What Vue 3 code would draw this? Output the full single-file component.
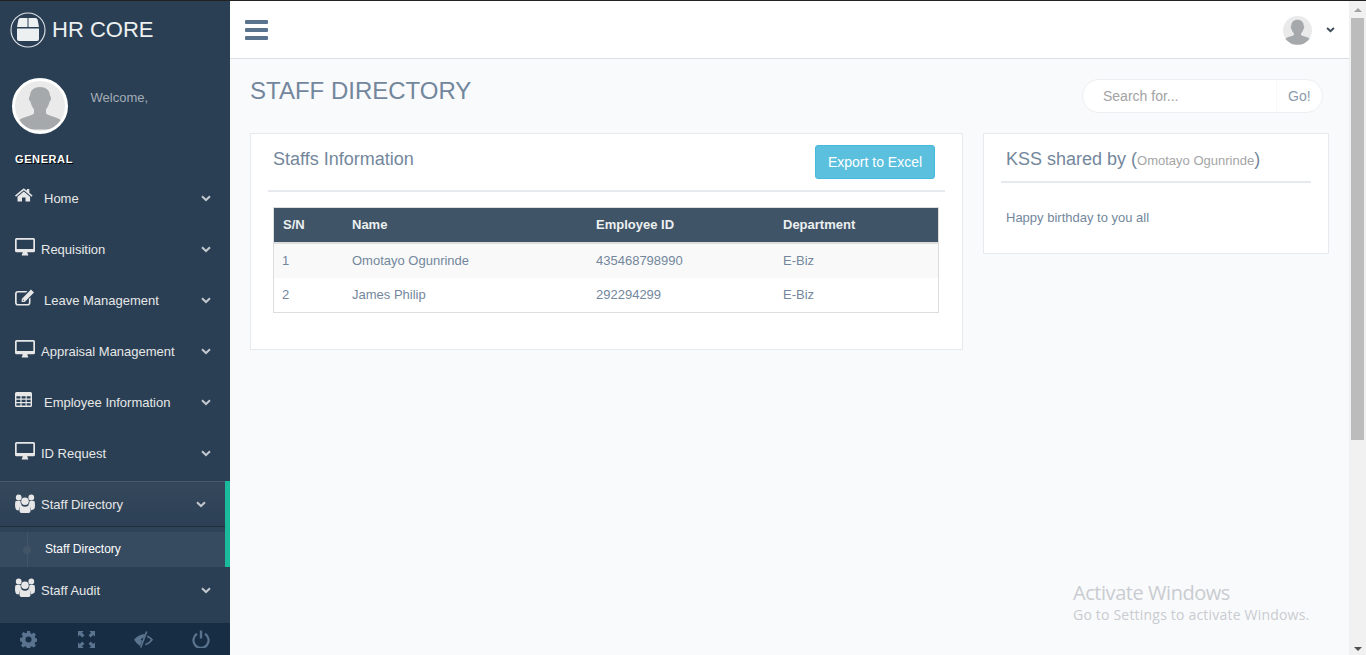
<script setup>
const menu = [
  { label: 'Home', icon: 'home', gap: true },
  { label: 'Requisition', icon: 'desktop' },
  { label: 'Leave Management', icon: 'edit', gap: true },
  { label: 'Appraisal Management', icon: 'desktop' },
  { label: 'Employee Information', icon: 'table', gap: true },
  { label: 'ID Request', icon: 'desktop' },
  { label: 'Staff Directory', icon: 'users', active: true },
  { label: 'Staff Audit', icon: 'users' }
]

const staff = [
  { sn: 1, name: 'Omotayo Ogunrinde', id: '435468798990', dept: 'E-Biz' },
  { sn: 2, name: 'James Philip', id: '292294299', dept: 'E-Biz' }
]
</script>

<template>
  <div class="page">
    <aside class="sidebar">
      <div class="brand">
        <span class="brand-logo">
          <svg viewBox="0 0 36 36" width="36" height="36">
            <circle cx="18" cy="18" r="17" fill="none" stroke="#dfe4e8" stroke-width="1.1" />
            <path d="M10.500 6h7v9H7l1.300-7Q8.700 6 10.500 6ZM18.500 6h7q1.800 0 2.200 2l1.300 7H18.500ZM7 16.500h22V27q0 2-2 2H9q-2 0-2-2Z" fill="#ecf0f1" />
          </svg>
        </span>
        <span>HR CORE</span>
      </div>

      <div class="profile">
        <svg class="profile-pic" viewBox="0 0 56 56" width="56" height="56">
          <defs>
            <clipPath id="pic"><circle cx="28" cy="28" r="25" /></clipPath>
          </defs>
          <circle cx="28" cy="28" r="26.500" fill="#eaeaea" stroke="#fff" stroke-width="3" />
          <path clip-path="url(#pic)" d="M18 18c0-6 4.500-9 10-9s10 3 10 9c1.500 1 1.500 4-.3 5.500-.8 3-2.200 6-3.700 8v4c3 3 12 3.500 15 7 1.500 2 2 5 2 9H5c0-4 .5-7 2-9 3-3.500 12-4 15-7v-4c-1.500-2-2.900-5-3.700-8C16.500 22 16.500 19 18 18Z" fill="#a6a9ac" />
        </svg>
        <span class="welcome">Welcome,</span>
      </div>

      <h3 class="section">General</h3>

      <ul class="menu">
        <li v-for="item in menu" :key="item.label" :class="{ active: item.active }">
          <div class="menu-row">
            <svg class="menu-icon" viewBox="0 0 20 20" width="20" height="20" fill="#e7e7e7">
              <path v-if="item.icon === 'home'" d="M0 9.500 8.200 2.700q.6-.5 1.200 0l2.500 2.100V3h2.400v3.800L17.600 9.500l-1 1.200L8.800 4.300 1 10.700ZM2.500 10.700 8.800 5.600l6.300 5.100V15q0 .6-.6.600h-4V11.500H7V15.600H3.100q-.6 0-.6-.6Z" />
              <path v-else-if="item.icon === 'desktop'" fill-rule="evenodd" d="M1.500 1h17Q20 1 20 2.500v11.200q0 1.500-1.500 1.500H12.300q0 1.500.9 2.300v1H6.800v-1q.9-.8.9-2.300H1.500Q0 15.200 0 13.700V2.500Q0 1 1.500 1ZM1.700 2.700v9.400h16.600V2.700Z" />
              <path v-else-if="item.icon === 'edit'" fill-rule="evenodd" d="M3 3h9.500l-1.600 1.600H3Q1.700 4.600 1.700 6v8.500Q1.700 16 3 16h9.500q1.400 0 1.400-1.500v-3.400l1.600-1.600v5Q15.500 17.600 12.500 17.600H3Q0 17.600 0 14.500V6Q0 3 3 3ZM16 1.600l3 3-9.300 9.300H6.700V10.900ZM7.900 11.300v1.400h1.400Z" />
              <path v-else-if="item.icon === 'table'" fill-rule="evenodd" d="M1.500 2h14Q17 2 17 3.500v12q0 1.500-1.500 1.500h-14Q0 17 0 15.500v-12Q0 2 1.500 2ZM1.400 6.200v2.400h4V6.200ZM6.600 6.200v2.400h4V6.200ZM11.700 6.200v2.400h3.900V6.200ZM1.400 9.800v2.300h4V9.800ZM6.600 9.800v2.300h4V9.800ZM11.700 9.800v2.300h3.900V9.800ZM1.400 13.300v2.300h4v-2.300ZM6.600 13.300v2.300h4v-2.300ZM11.700 13.300v2.300h3.900v-2.300Z" />
              <path v-else d="M10 4.500a3.800 3.800 0 1 1 0 7.600 3.800 3.800 0 0 1 0-7.600ZM3.700 1.500a2.900 2.900 0 1 1 0 5.800 2.900 2.900 0 0 1 0-5.800ZM16.300 1.500a2.900 2.900 0 1 1 0 5.800 2.900 2.900 0 0 1 0-5.800ZM.3 8.500Q1 7.800 3.500 7.800q1.500 0 2.200.5Q5.200 10.800 7 12.300q-3 1.200-3 5H2Q0 16.500 0 12ZM18 16.500q-.5.800-2 .8 0-3.800-3-5 1.800-1.500 1.300-4 .7-.5 2.200-.5 2.500 0 3.200.7L20 12q0 4.500-2 4.500ZM6.800 12.800q1.200 1 3.200 1t3.200-1q2.300 0 2.300 3.500v1.700q0 2-2 2H6.500q-2 0-2-2v-1.700q0-3.500 2.300-3.500Z" />
            </svg>
            <span class="menu-label" :class="{ wide: item.gap }">{{ item.label }}</span>
            <svg class="chev" viewBox="0 0 10 7" width="10" height="7">
              <path d="M1 1.200 5 5l4-3.800" fill="none" stroke="currentColor" stroke-width="2" />
            </svg>
          </div>
          <div v-if="item.active" class="submenu">
            <span class="sub-dot"></span>
            <span class="sub-label">Staff Directory</span>
          </div>
        </li>
      </ul>

      <div class="sidebar-footer">
        <span>
          <svg viewBox="0 0 18 18" width="17" height="17" fill="#5a738e">
            <path fill-rule="evenodd" d="M7.400 0h3.200l.5 2.500 1.500.6 2.100-1.400 2.200 2.200-1.400 2.100.6 1.500 2.500.5v3.200l-2.500.5-.6 1.500 1.400 2.100-2.200 2.200-2.100-1.400-1.500.6-.5 2.500H7.400l-.5-2.500-1.500-.6-2.100 1.400-2.200-2.200 1.400-2.100-.6-1.500L-.1 10.600V7.400l2.500-.5.6-1.500-1.400-2.100 2.200-2.200 2.100 1.400 1.500-.6ZM9 5.800a3.200 3.200 0 1 0 0 6.400 3.200 3.200 0 0 0 0-6.400Z" />
          </svg>
        </span>
        <span>
          <svg viewBox="0 0 18 18" width="17" height="17" fill="#5a738e">
            <path d="M0 0h6L4.200 1.800l2.700 2.700-2.400 2.400-2.700-2.700L0 6ZM18 0v6l-1.800-1.800-2.700 2.700-2.400-2.400 2.700-2.700L12 0ZM0 18v-6l1.800 1.800 2.700-2.700 2.400 2.400-2.700 2.700L6 18ZM18 18h-6l1.800-1.800-2.700-2.700 2.400-2.400 2.700 2.700L18 12Z" />
          </svg>
        </span>
        <span>
          <svg viewBox="0 0 20 18" width="19" height="17">
            <path d="M11.700 3.200 6.300 15.800Q2.500 13.500 0 9.200 4 3.800 11.700 3.200Z" fill="#5a738e" />
            <circle cx="8.600" cy="9" r="1.300" fill="#172d44" />
            <path d="M13.400.5 7 17.500" stroke="#5a738e" stroke-width="1.800" />
            <path d="M14 5.500q3.300 1.500 5 3.700-2.500 3.700-7 5.300" fill="none" stroke="#5a738e" stroke-width="1.800" />
          </svg>
        </span>
        <span>
          <svg viewBox="0 0 18 18" width="18" height="18">
            <path d="M5 3.800a7.600 7.600 0 1 0 8 0" fill="none" stroke="#5a738e" stroke-width="2.200" />
            <path d="M9 .5v8" stroke="#5a738e" stroke-width="2.400" />
          </svg>
        </span>
      </div>
    </aside>

    <div class="main">
      <header class="topbar">
        <div class="burger"><i></i><i></i><i></i></div>
        <div class="user">
          <svg viewBox="0 0 56 56" width="29" height="29">
            <defs>
              <clipPath id="pic2"><circle cx="28" cy="28" r="28" /></clipPath>
            </defs>
            <circle cx="28" cy="28" r="28" fill="#eaeaea" />
            <path clip-path="url(#pic2)" d="M16 19c0-8 5.500-12 12-12s12 4 12 12c1.500 1 1.500 4.500-.3 6-1 3.500-2.700 6.500-4.700 8.500v3c3.500 3 13 3.500 16 7 1.500 2 2 5 2 12H3c0-7 .5-10 2-12 3-3.500 12.500-4 16-7v-3c-2-2-3.700-5-4.700-8.500C14.500 23.500 14.500 20 16 19Z" fill="#a6a9ac" />
          </svg>
          <svg class="user-chev" viewBox="0 0 10 7" width="9" height="6">
            <path d="M1 1.200 5 5l4-3.800" fill="none" stroke="#3b4a58" stroke-width="2.200" />
          </svg>
        </div>
      </header>

      <main class="content">
        <div class="title-row">
          <h1>STAFF DIRECTORY</h1>
          <div class="search">
            <span class="search-input">Search for...</span>
            <span class="search-go">Go!</span>
          </div>
        </div>

        <div class="panels">
          <section class="panel panel-staff">
            <div class="panel-head">
              <h2>Staffs Information</h2>
              <button class="export">Export to Excel</button>
            </div>
            <table>
              <thead>
                <tr>
                  <th class="col-sn">S/N</th>
                  <th class="col-name">Name</th>
                  <th class="col-id">Employee ID</th>
                  <th>Department</th>
                </tr>
              </thead>
              <tbody>
                <tr v-for="row in staff" :key="row.sn">
                  <td>{{ row.sn }}</td>
                  <td>{{ row.name }}</td>
                  <td>{{ row.id }}</td>
                  <td>{{ row.dept }}</td>
                </tr>
              </tbody>
            </table>
          </section>

          <section class="panel panel-kss">
            <div class="kss-head">
              <h2>KSS shared by (<small>Omotayo Ogunrinde</small>)</h2>
            </div>
            <p>Happy birthday to you all</p>
          </section>
        </div>
      </main>
    </div>

    <div class="scrollbar">
      <span class="arrow up"></span>
      <span class="thumb"></span>
      <span class="arrow down"></span>
    </div>

    <div class="watermark">
      <div class="wm-title">Activate Windows</div>
      <div class="wm-sub">Go to Settings to activate Windows.</div>
    </div>
  </div>
</template>

<style>
html, body {
  margin: 0;
  overflow: hidden;
}
</style>

<style scoped>
.page {
  position: relative;
  display: flex;
  height: 654px;
  border-top: 1px solid #222;
  overflow: hidden;
  font-family: "Liberation Sans", Arial, sans-serif;
  font-size: 13px;
  color: #73879c;
  background: #f9fafc;
}

.sidebar {
  position: relative;
  flex: none;
  width: 230px;
  background: #2a3f54;
  color: #ecf0f1;
}

.brand {
  display: flex;
  align-items: center;
  gap: 6px;
  height: 57px;
  padding-left: 10px;
  font-size: 22px;
}
.brand-logo {
  display: flex;
}

.profile {
  display: flex;
  align-items: flex-start;
  height: 87px;
  padding: 20px 0 0 12px;
  box-sizing: border-box;
}
.welcome {
  margin: 12px 0 0 22.500px;
  color: #a3adb6;
}

.section {
  margin: 0;
  height: 22px;
  padding: 6px 0 0 15px;
  line-height: 16px;
  font-size: 11px;
  font-weight: bold;
  letter-spacing: 0.6px;
  text-transform: uppercase;
  text-shadow: 1px 1px #000;
  color: #fff;
}

.menu {
  margin: 0;
  padding: 0;
  list-style: none;
}
.menu-row {
  display: flex;
  align-items: center;
  height: 51px;
  padding: 0 19px 0 15px;
  color: #e7e7e7;
}
.menu-icon {
  flex: none;
  margin-top: -6px;
}
.menu-label {
  flex: 1;
  margin-left: 6px;
}
.menu-label.wide {
  margin-left: 9px;
}
.chev {
  flex: none;
  color: #c2c8ce;
}

.active {
  margin-top: 2px;
  border-right: 5px solid #1abb9c;
  background: #2a3f54;
}
.active .menu-row {
  height: 46px;
  box-sizing: border-box;
  padding-right: 19px;
  border-top: 1px solid #49596a;
  border-bottom: 1px solid #1e2e3e;
  background: linear-gradient(#35485b, #2c4056);
}
.active .menu-icon {
  margin-top: -2px;
}
.active + li .menu-row {
  height: 46px;
}
.submenu {
  position: relative;
  display: flex;
  align-items: center;
  height: 40px;
  box-sizing: border-box;
  padding: 5px 0 1px 45px;
  background: linear-gradient(#2e4358 5px, #364b5f 5px);
}
.submenu::before {
  content: "";
  position: absolute;
  left: 27px;
  top: 5px;
  bottom: 0;
  width: 1px;
  background: #425567;
}
.sub-dot {
  position: absolute;
  left: 23px;
  top: 19px;
  width: 8px;
  height: 8px;
  border-radius: 50%;
  background: #425567;
}
.sub-label {
  font-size: 12px;
  color: #fff;
}

.sidebar-footer {
  position: absolute;
  left: 0;
  right: 0;
  bottom: 0;
  display: grid;
  grid-template-columns: repeat(4, 1fr);
  align-items: center;
  justify-items: center;
  height: 32px;
  background: #172d44;
}
.sidebar-footer span {
  display: flex;
}

.main {
  flex: 1;
  min-width: 0;
}

.topbar {
  display: flex;
  align-items: center;
  justify-content: space-between;
  height: 57px;
  padding: 0 14px 0 15px;
  border-bottom: 1px solid #d9dee4;
  background: #fff;
}
.burger {
  display: flex;
  flex-direction: column;
  gap: 4px;
  width: 23px;
}
.burger i {
  display: block;
  height: 4px;
  background: #5a738e;
  border-radius: 1px;
}
.user {
  display: flex;
  align-items: center;
  gap: 14px;
  padding-top: 2px;
}
.user-chev {
  margin-bottom: 2px;
}

.content {
  padding: 0 20px;
}
.title-row {
  display: flex;
  justify-content: space-between;
  align-items: flex-start;
  height: 74px;
  padding-top: 19px;
  box-sizing: border-box;
}
h1 {
  margin: 0;
  font-size: 24px;
  font-weight: 400;
  line-height: 26px;
}
.search {
  display: flex;
  align-items: center;
  width: 241px;
  height: 34px;
  box-sizing: border-box;
  margin: 1px 6px 0 0;
  border: 1px solid #eceef1;
  border-radius: 25px;
  background: #fff;
  font-size: 14px;
}
.search-input {
  flex: 1;
  padding-left: 20px;
  color: #a3a3a3;
}
.search-go {
  width: 46px;
  box-sizing: border-box;
  padding-left: 11px;
  line-height: 32px;
  border-left: 1px solid #f8f8f8;
  color: #8c9bab;
}

.panels {
  display: flex;
  align-items: flex-start;
  gap: 20px;
}
.panel {
  box-sizing: border-box;
  border: 1px solid #e6e9ed;
  background: #fff;
}
.panel-staff {
  width: 713px;
  height: 217px;
  padding: 0 17px;
}
.panel-kss {
  width: 346px;
  height: 121px;
  padding: 0 17px;
}
h2 {
  margin: 0;
  font-size: 18px;
  font-weight: 400;
  line-height: 20px;
}
small {
  font-size: 13px;
  color: #a5a5a5;
}
.panel-head {
  display: flex;
  justify-content: space-between;
  align-items: flex-start;
  height: 45px;
  padding: 11px 10px 0 5px;
  border-bottom: 2px solid #e6e9ed;
}
.panel-head h2 {
  margin-top: 4px;
}
.export {
  width: 120px;
  height: 34px;
  padding: 0;
  border: 1px solid #46b8da;
  border-radius: 3px;
  background: #5bc0de;
  font-family: inherit;
  font-size: 14px;
  color: #fff;
}
table {
  width: 666px;
  margin: 15px 0 0 5px;
  border-collapse: collapse;
  table-layout: fixed;
  font-size: 13px;
  border: 1px solid #dddddd;
}
th {
  height: 34px;
  padding: 0 9px;
  border-bottom: 2px solid #dddddd;
  background: #405467;
  font-weight: bold;
  line-height: 34px;
  vertical-align: top;
  text-align: left;
  color: #ecf0f1;
}
td {
  height: 34px;
  padding: 0 9px;
  line-height: 34px;
  vertical-align: top;
}
td:first-child {
  padding-left: 8px;
}
tbody tr:nth-child(odd) {
  background: #f9f9f9;
}
.col-sn { width: 69.500px; box-sizing: border-box; }
.col-name { width: 244px; box-sizing: border-box; }
.col-id { width: 187px; box-sizing: border-box; }

.kss-head {
  height: 49px;
  padding: 15px 5px 0;
  box-sizing: border-box;
  border-bottom: 2px solid #e6e9ed;
}
.panel-kss p {
  margin: 27px 0 0 5px;
  font-size: 13px;
  line-height: 16px;
}

.scrollbar {
  position: relative;
  flex: none;
  display: flex;
  flex-direction: column;
  align-items: center;
  width: 17px;
  background: #f1f1f1;
}
.thumb {
  position: absolute;
  left: 2px;
  top: 17px;
  width: 13px;
  height: 422px;
  background: #bcbcbc;
}
.arrow {
  position: absolute;
  left: 5px;
  width: 0;
  height: 0;
  border-left: 4px solid transparent;
  border-right: 4px solid transparent;
}
.arrow.up {
  top: 7px;
  border-bottom: 4px solid #a3a3a3;
}
.arrow.down {
  bottom: 4px;
  border-top: 4px solid #505050;
}

.watermark {
  position: absolute;
  left: 1073px;
  top: 580px;
  font-family: "Open Sans", sans-serif;
  color: #c9ccd0;
  pointer-events: none;
}
.wm-title {
  font-size: 20px;
  line-height: 24px;
  letter-spacing: -0.45px;
}
.wm-sub {
  font-size: 14px;
  line-height: 20px;
  letter-spacing: 0.2px;
}
</style>
